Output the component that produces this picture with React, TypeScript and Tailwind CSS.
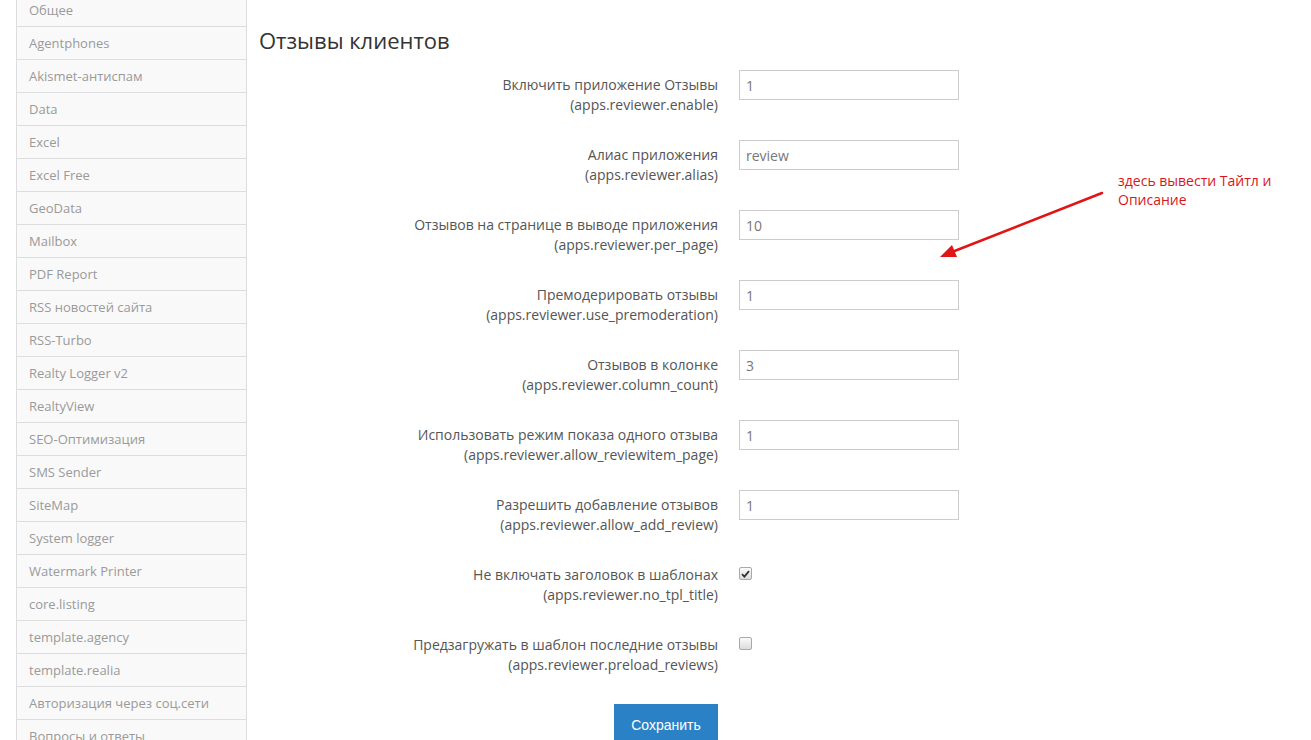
import React from "react";

const items = [
  "Общее",
  "Agentphones",
  "Akismet-антиспам",
  "Data",
  "Excel",
  "Excel Free",
  "GeoData",
  "Mailbox",
  "PDF Report",
  "RSS новостей сайта",
  "RSS-Turbo",
  "Realty Logger v2",
  "RealtyView",
  "SEO-Оптимизация",
  "SMS Sender",
  "SiteMap",
  "System logger",
  "Watermark Printer",
  "core.listing",
  "template.agency",
  "template.realia",
  "Авторизация через соц.сети",
  "Вопросы и ответы",
];

type Row =
  | { label: string; key: string; type: "text"; value: string }
  | { label: string; key: string; type: "check"; checked: boolean };

const rows: Row[] = [
  { label: "Включить приложение Отзывы", key: "(apps.reviewer.enable)", type: "text", value: "1" },
  { label: "Алиас приложения", key: "(apps.reviewer.alias)", type: "text", value: "review" },
  { label: "Отзывов на странице в выводе приложения", key: "(apps.reviewer.per_page)", type: "text", value: "10" },
  { label: "Премодерировать отзывы", key: "(apps.reviewer.use_premoderation)", type: "text", value: "1" },
  { label: "Отзывов в колонке", key: "(apps.reviewer.column_count)", type: "text", value: "3" },
  { label: "Использовать режим показа одного отзыва", key: "(apps.reviewer.allow_reviewitem_page)", type: "text", value: "1" },
  { label: "Разрешить добавление отзывов", key: "(apps.reviewer.allow_add_review)", type: "text", value: "1" },
  { label: "Не включать заголовок в шаблонах", key: "(apps.reviewer.no_tpl_title)", type: "check", checked: true },
  { label: "Предзагружать в шаблон последние отзывы", key: "(apps.reviewer.preload_reviews)", type: "check", checked: false },
];

export default function App() {
  return (
    <div
      className="relative w-[1311px] h-[740px] overflow-hidden bg-white flex"
      style={{ fontFamily: '"Open Sans", "Noto Sans", sans-serif' }}
    >
      <div className="pl-[16px] shrink-0">
        <div className="w-[231px] mt-[-6px] border-l border-r border-[#dddddd] bg-[#f9f9f9]">
          {items.map((it) => (
            <div
              key={it}
              className="h-[33px] border-b border-[#dddddd] pl-[12px] pt-[1px] flex items-center text-[13px] text-[#9a9a9a]"
            >
              {it}
            </div>
          ))}
        </div>
      </div>

      <div className="pl-[12px] pt-[26px] flex-1">
        <h2 className="text-[22px] leading-[28px] text-[#333333] font-normal mb-[16px]">
          Отзывы клиентов
        </h2>
        <div className="flex flex-col">
          {rows.map((r) => (
            <div key={r.key} className="h-[70px] flex">
              <div className="w-[459px] text-right text-[14px] leading-[20px] text-[#555555] pt-[5px]">
                <div>{r.label}</div>
                <div>{r.key}</div>
              </div>
              <div className="ml-[21px]">
                {r.type === "text" ? (
                  <div className="w-[220px] h-[30px] border border-[#cccccc] bg-white pl-[6px] flex items-center text-[14px] text-[#777777]">
                    {r.value}
                  </div>
                ) : (
                  <div className="mt-[7px] w-[13px] h-[13px] rounded-[2px] border border-[#a9a9a9] bg-gradient-to-b from-[#fafafa] to-[#dcdcdc] flex items-center justify-center">
                    {r.checked && (
                      <svg width="9" height="8" viewBox="0 0 9 8">
                        <path d="M1 4.2 L3.4 6.6 L8 1.2" fill="none" stroke="#333333" strokeWidth="1.8" />
                      </svg>
                    )}
                  </div>
                )}
              </div>
            </div>
          ))}
          <div className="w-[459px] flex justify-end mt-[4px]">
            <button
              className="w-[104px] h-[42px] bg-[#2b81c5] text-white text-[14px]"
              style={{ fontFamily: '"Liberation Sans", Arial, sans-serif' }}
            >
              Сохранить
            </button>
          </div>
        </div>
      </div>

      <div className="absolute left-[1118px] top-[171px] text-[14px] leading-[19px] text-[#d9161c]">
        <div>здесь вывести Тайтл и</div>
        <div>Описание</div>
      </div>
      <svg className="absolute left-0 top-0" width="1311" height="740" viewBox="0 0 1311 740">
        <line x1="1102" y1="193" x2="952" y2="252" stroke="#e01515" strokeWidth="2.5" strokeLinecap="round" />
        <polygon points="940,257 952,245 957,257" fill="#e01515" />
      </svg>
    </div>
  );
}
